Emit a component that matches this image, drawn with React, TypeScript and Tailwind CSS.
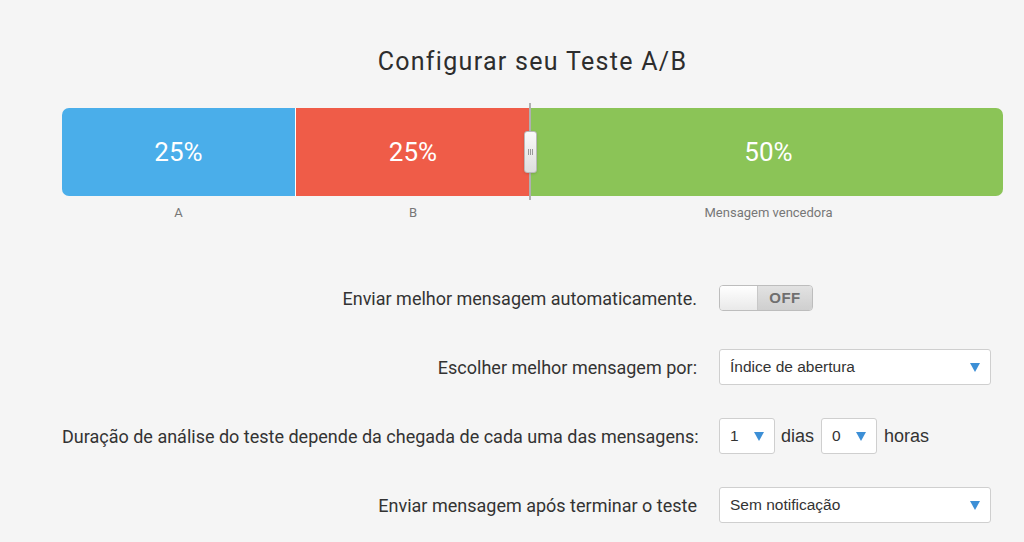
import React from "react";

function Caret() {
  return (
    <svg width="10" height="9" viewBox="0 0 10 9" className="shrink-0">
      <path d="M0 0 H10 L5 9 Z" fill="#3c8fd6" />
    </svg>
  );
}

function Select({ value, className }: { value: string; className: string }) {
  return (
    <div
      className={
        "flex h-[36px] items-center justify-between rounded-[3px] border border-[#cfcfcf] bg-white pl-[10px] pr-[10px] text-[15.5px] text-[#333] " +
        className
      }
      style={{ fontFamily: '"Liberation Sans", Arial, sans-serif' }}
    >
      <span>{value}</span>
      <Caret />
    </div>
  );
}

export default function App() {
  return (
    <div
      className="min-h-[542px] w-[1024px] bg-[#f5f5f5] pl-[62px] text-[#333]"
      style={{ fontFamily: "Roboto, sans-serif" }}
    >
      <div className="w-[941px]">
        {/* titulo */}
        <h1 className="pt-[46px] text-center text-[25px] leading-[32px] tracking-[1.3px] text-[#2d2d2d]">
          Configurar seu Teste A/B
        </h1>

        {/* barra de divisão */}
        <div className="relative mt-[30px] flex h-[88px] text-[26px] text-white">
          <div className="flex w-[233px] items-center justify-center rounded-l-[7px] bg-[#4aaeea]">25%</div>
          <div className="w-[1px] bg-white" />
          <div className="flex w-[234px] items-center justify-center bg-[#ef5c48]">25%</div>
          <div className="flex flex-1 items-center justify-center rounded-r-[7px] bg-[#8bc457] pl-[4px]">50%</div>
          {/* alça */}
          <div className="absolute left-[467px] top-[-5px] h-[97px] w-[2px] bg-[#b0b0b0]" />
          <div className="absolute left-[462px] top-[23px] flex h-[42px] w-[13px] items-center justify-center rounded-[3px] border border-[#b9b9b9] bg-gradient-to-b from-[#fafafa] to-[#dedede] shadow-sm">
            <div className="flex gap-[1px]">
              <div className="h-[6px] w-[1px] bg-[#999]" />
              <div className="h-[6px] w-[1px] bg-[#999]" />
              <div className="h-[6px] w-[1px] bg-[#999]" />
            </div>
          </div>
        </div>
        <div className="mt-[10px] flex text-[13px] leading-[14px] text-[#777]">
          <div className="w-[233px] text-center">A</div>
          <div className="w-[1px]" />
          <div className="w-[234px] text-center">B</div>
          <div className="flex-1 pl-[4px] text-center">Mensagem vencedora</div>
        </div>

        {/* formulário */}
        <div className="mt-[60px] grid grid-cols-[635px_1fr] items-center gap-x-[22px] gap-y-[33px] text-[18px]">
          <div className="whitespace-nowrap text-right">Enviar melhor mensagem automaticamente.</div>
          <div className="flex h-[36px] items-center">
            <div className="flex h-[26px] w-[94px] overflow-hidden rounded-[4px] border border-[#bdbdbd]">
              <div className="w-[38px] border-r border-[#c8c8c8] bg-gradient-to-b from-[#ffffff] to-[#e9e9e9]" />
              <div
                className="flex flex-1 items-center justify-center bg-gradient-to-b from-[#e2e2e2] to-[#cfcfcf] text-[15px] font-bold tracking-[0.5px] text-[#6f6f6f]"
                style={{ fontFamily: '"Liberation Sans", Arial, sans-serif' }}
              >
                OFF
              </div>
            </div>
          </div>

          <div className="whitespace-nowrap text-right">Escolher melhor mensagem por:</div>
          <Select value="Índice de abertura" className="w-[272px]" />

          <div className="whitespace-nowrap text-right">Duração de análise do teste depende da chegada de cada uma das mensagens:</div>
          <div className="flex items-center">
            <Select value="1" className="w-[56px]" />
            <span className="ml-[6px] mr-[7px] text-[18px]" style={{ fontFamily: '"Liberation Sans", Arial, sans-serif' }}>dias</span>
            <Select value="0" className="w-[56px]" />
            <span className="ml-[7px] text-[18px]" style={{ fontFamily: '"Liberation Sans", Arial, sans-serif' }}>horas</span>
          </div>

          <div className="whitespace-nowrap text-right">Enviar mensagem após terminar o teste</div>
          <Select value="Sem notificação" className="w-[272px]" />
        </div>
      </div>
    </div>
  );
}
